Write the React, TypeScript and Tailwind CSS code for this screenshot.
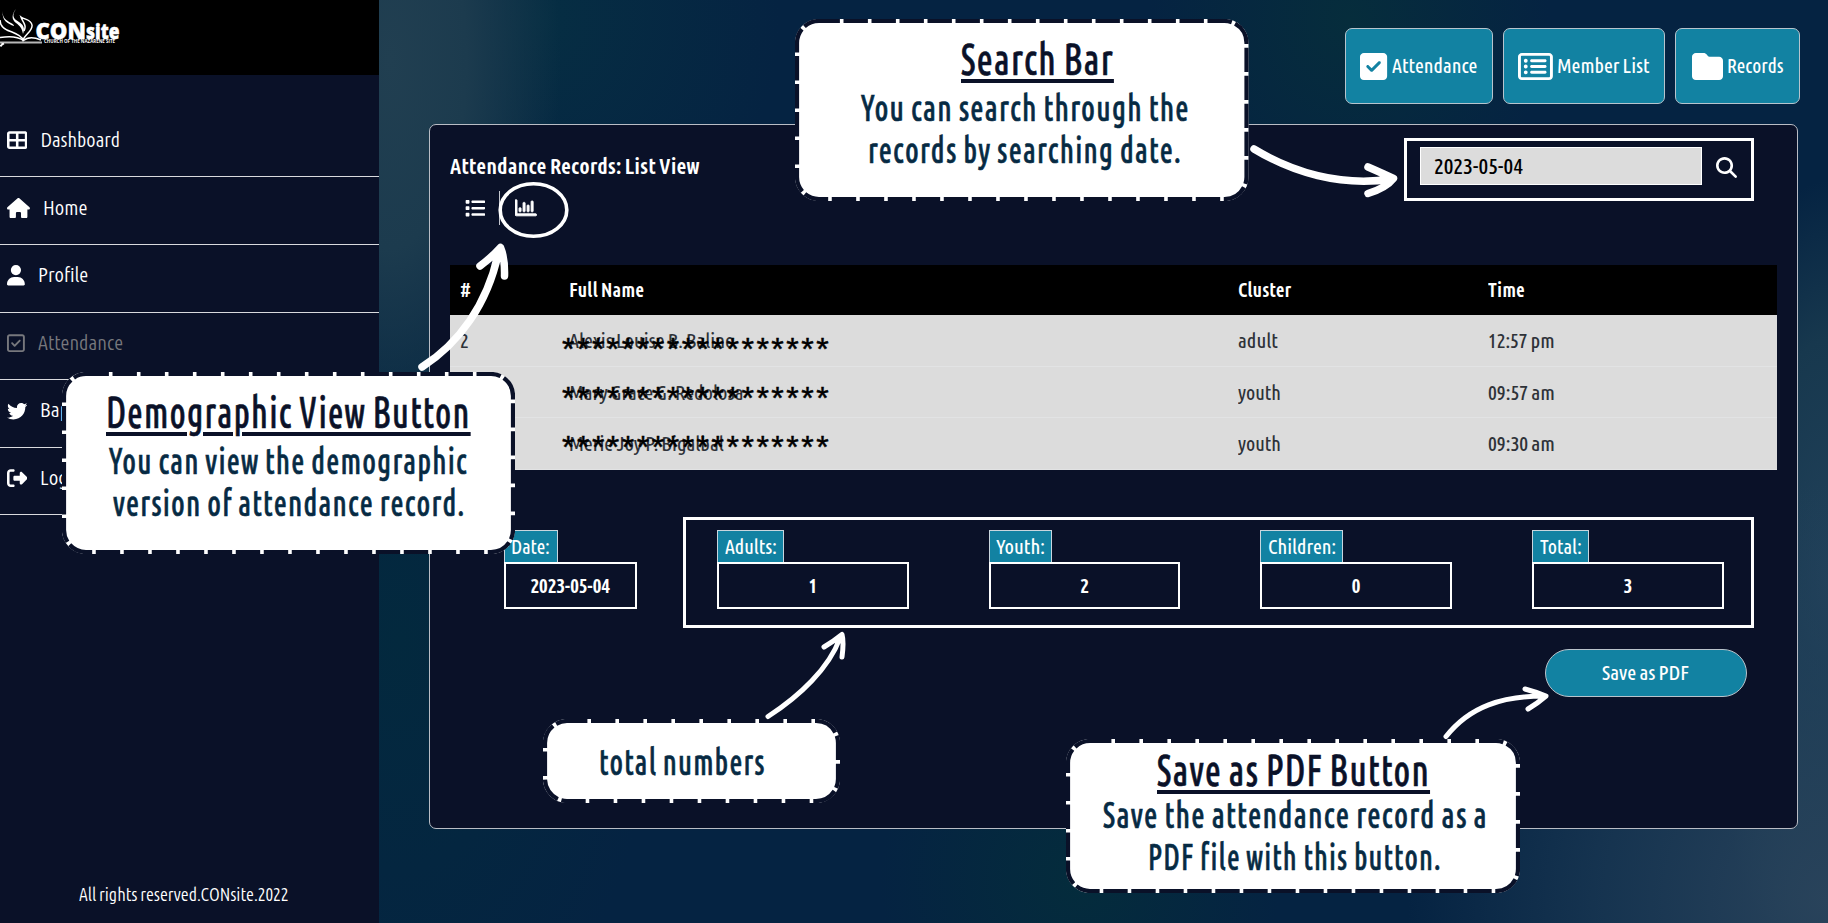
import { useLayoutEffect, useRef, useState } from 'react';
import type { ReactNode } from 'react';
import type { IconType } from 'react-icons';
import {
  FaTableCellsLarge,
  FaHouse,
  FaUser,
  FaRegSquareCheck,
  FaTwitter,
  FaRightFromBracket,
  FaSquareCheck,
  FaRegRectangleList,
  FaFolder,
  FaList,
  FaMagnifyingGlass,
} from 'react-icons/fa6';
import { FaRegChartBar } from 'react-icons/fa';

/** One line of text, squeezed or widened to the width of its box. */
function Fit({ children, className = '' }: { children: ReactNode; className?: string }) {
  const outer = useRef<HTMLSpanElement>(null);
  const inner = useRef<HTMLSpanElement>(null);
  const [scale, setScale] = useState(1);
  useLayoutEffect(() => {
    if (outer.current && inner.current && inner.current.offsetWidth > 0) {
      setScale(outer.current.clientWidth / inner.current.offsetWidth);
    }
  }, [children]);
  return (
    <span ref={outer} className={`block shrink-0 ${className}`}>
      <span
        ref={inner}
        className="inline-block origin-left whitespace-nowrap"
        style={{ transform: `scaleX(${scale})` }}
      >
        {children}
      </span>
    </span>
  );
}

type NavItem = { label: string; width: string; Icon: IconType; iconW: string; active?: boolean };

const nav: NavItem[] = [
  { label: 'Dashboard', width: 'w-[80px]', Icon: FaTableCellsLarge, iconW: 'w-[1em]' },
  { label: 'Home', width: 'w-[44px]', Icon: FaHouse, iconW: 'w-[1.125em]' },
  { label: 'Profile', width: 'w-[50px]', Icon: FaUser, iconW: 'w-[0.875em]' },
  { label: 'Attendance', width: 'w-[85px]', Icon: FaRegSquareCheck, iconW: 'w-[0.875em]', active: true },
  { label: 'Baptism', width: 'w-[62px]', Icon: FaTwitter, iconW: 'w-[1em]' },
  { label: 'Logout', width: 'w-[54px]', Icon: FaRightFromBracket, iconW: 'w-[1em]' },
];

function Logo() {
  return (
    <svg viewBox="0 0 124 60" className="block h-[60px] w-[124px] text-white" fill="none" stroke="currentColor">
      <path d="M0 20 C0 27 5 30 12 32 C17 34 22 36 23 40 C25 34 33 31 32 25 C31 19 25 20 21 17 C23 23 27 25 24 31" strokeWidth="1.5" />
      <path d="M3 11 C2 18 6 20 11 23 C13 24 14 25 14 26 C8 24 1 20 3 11 Z" fill="currentColor" stroke="none" />
      <path d="M16 9 C11 16 14 19 19 22 C24 25 25 29 23 34 C22 28 20 26 16 23 C11 19 12 14 16 9 Z" fill="currentColor" stroke="none" />
      <path d="M0 37.500 C9 36 18 36.500 23.500 40.500 C28 36.500 34 37 41 40" strokeWidth="1.500" />
      <path d="M0 42.500 L42 42.500" strokeWidth="1.800" stroke="#b8b8b8" />
      <path d="M0 46 L4 43.500 M1 46.500 L2.500 43" strokeWidth="1.500" />
      <text x="35.500" y="38.500" textLength="50.500" lengthAdjust="spacingAndGlyphs" fill="currentColor" strokeWidth="0.500" className="font-['Open_Sans'] text-[23.500px] font-extrabold [font-stretch:normal]">
        CON
      </text>
      <text x="86" y="38.500" textLength="33.500" lengthAdjust="spacingAndGlyphs" fill="currentColor" strokeWidth="0.500" className="font-['Open_Sans'] text-[21.500px] font-extrabold [font-stretch:normal]">
        site
      </text>
      <text x="44" y="43.300" textLength="71" lengthAdjust="spacingAndGlyphs" fill="currentColor" stroke="none" className="font-['Open_Sans'] text-[4.500px] font-bold [font-stretch:normal]">
        CHURCH OF THE NAZARENE SITE
      </text>
    </svg>
  );
}

function Sidebar() {
  return (
    <aside className="flex h-full w-[379px] shrink-0 flex-col bg-[#0a1128] text-white">
      <div className="h-[74.500px] bg-black">
        <Logo />
      </div>
      <nav className="mt-[35.300px] text-[20.400px]">
        {nav.map(({ label, width, Icon, iconW, active }) => (
          <div
            key={label}
            className={`flex h-[67.600px] items-center gap-[13px] border-b border-[#d9dade] pb-[5.500px] pl-[7px] ${active ? 'text-[#77787d]' : ''}`}
          >
            <Icon className={`shrink-0 ${iconW}`} />
            <Fit className={width}>{label}</Fit>
          </div>
        ))}
      </nav>
      <footer className="mt-auto mb-[15px] pl-[78.500px] text-[18px]">
        <Fit className="w-[209px]">All rights reserved.CONsite.2022</Fit>
      </footer>
    </aside>
  );
}

const actions = [
  { label: 'Attendance', box: 'w-[148px]', width: 'w-[85px]', Icon: FaSquareCheck, iconW: 'w-[0.875em]' },
  { label: 'Member List', box: 'w-[162.500px]', width: 'w-[92.500px]', Icon: FaRegRectangleList, iconW: 'w-[1.125em]' },
  { label: 'Records', box: 'w-[125px]', width: 'w-[57px]', Icon: FaFolder, iconW: 'w-[1em]' },
];

const rows = [
  { n: '2', name: 'Alexis Louise B. Balino', nameW: 'w-[165px]', cluster: 'adult', clusterW: 'w-[40px]', time: '12:57 pm', mask: 'top-[11.500px]' },
  { n: '', name: 'Mary Grace G. Redolosa', nameW: 'w-[174px]', cluster: 'youth', clusterW: 'w-[43px]', time: '09:57 am', mask: 'top-[9.500px]' },
  { n: '', name: 'Merie Joy P. Bigalbal', nameW: 'w-[155px]', cluster: 'youth', clusterW: 'w-[43px]', time: '09:30 am', mask: 'top-[7px]' },
];

const stats = [
  { label: 'Adults:', width: 'w-[51.500px]', value: '1' },
  { label: 'Youth:', width: 'w-[48.500px]', value: '2' },
  { label: 'Children:', width: 'w-[67.500px]', value: '0' },
  { label: 'Total:', width: 'w-[41.500px]', value: '3' },
];

function Stat({ label, labelW, box, children }: { label: string; labelW: string; box: string; children: ReactNode }) {
  return (
    <div className={`flex shrink-0 flex-col items-start ${box}`}>
      <div className="flex h-[32px] items-center border border-b-0 border-[#c9d6de] bg-[#1282a2] px-[6.500px] pt-px text-[20.400px] font-medium">
        <Fit className={labelW}>{label}</Fit>
      </div>
      <div className="flex h-[47px] w-full items-center justify-center border-2 border-white pt-px text-[20.400px] font-bold">
        {children}
      </div>
    </div>
  );
}

function Panel() {
  return (
    <section className="mt-[20px] flex h-[705px] w-[1369px] flex-col rounded-[7px] border border-[#b9bdc5] bg-[#0a1128] pl-[20px] text-white">
      <div className="mt-[13px] flex h-[63px] justify-between pr-[43px]">
        <div className="pt-[14px]">
          <Fit className="w-[249px] text-[21.500px] leading-[28px] font-bold">Attendance Records: List View</Fit>
          <div className="mt-[11px] flex h-[34px] items-center pl-[15px] text-[20.400px]">
            <FaList />
            <span className="mr-[15px] ml-[14px] h-full w-px bg-[#c4c7cf]" />
            <FaRegChartBar className="text-[21.500px]" stroke="currentColor" strokeWidth={22} />
          </div>
        </div>
        <div className="flex w-[350px] items-start border-[3px] border-white pt-[6px] pl-[12.500px]">
          <div className="flex h-[38px] w-[282px] items-center border border-white bg-[#dcdcdc] pb-[2px] pl-[13px] text-[22px] font-medium text-black">
            <Fit className="w-[89px]">2023-05-04</Fit>
          </div>
          <FaMagnifyingGlass className="mt-[10px] ml-[14.500px] text-[21px]" />
        </div>
      </div>

      <div className="mt-[64px] w-[1327px] text-[20.400px]">
        <div className="grid h-[50px] grid-cols-[119px_669px_250px_1fr] items-center bg-black pt-px font-bold">
          <Fit className="ml-[10px] w-[11px]">#</Fit>
          <Fit className="w-[75px]">Full Name</Fit>
          <Fit className="w-[53px]">Cluster</Fit>
          <Fit className="w-[37px]">Time</Fit>
        </div>
        {rows.map((r) => (
          <div
            key={r.name}
            className="grid h-[51.700px] grid-cols-[119px_669px_250px_1fr] items-center border-b border-[#e2e3e4] bg-[#dcdcdc] pt-[2px] font-medium text-[#2e3238]"
          >
            <span className="pl-[10px]">{r.n}</span>
            <div className="relative flex h-full items-center">
              <Fit className={r.nameW}>{r.name}</Fit>
              <span
                className={`absolute -left-[7px] font-['Liberation_Sans'] text-[32px] leading-[40px] font-normal tracking-[2.500px] whitespace-nowrap text-black [-webkit-text-stroke:0.500px_#000] ${r.mask}`}
              >
                ******************
              </span>
            </div>
            <Fit className={r.clusterW}>{r.cluster}</Fit>
            <Fit className="w-[67px]">{r.time}</Fit>
          </div>
        ))}
      </div>

      <div className="mt-[47px] flex pl-[53.500px]">
        <div className="pt-[13px]">
          <Stat label="Date:" labelW="w-[39px]" box="w-[133px]">
            <Fit className="w-[79px]">2023-05-04</Fit>
          </Stat>
        </div>
        <div className="ml-[46.500px] flex h-[111px] w-[1071px] gap-[80.200px] border-[3px] border-white pt-[10px] pl-[31px]">
          {stats.map((s) => (
            <Stat key={s.label} label={s.label} labelW={s.width} box="w-[191.500px]">
              {s.value}
            </Stat>
          ))}
        </div>
      </div>

      <button className="mt-[21px] mr-[50px] flex h-[48px] w-[202px] items-center justify-center self-end rounded-[24px] border border-[#b9c3cb] bg-[#1282a2] pr-[3px] text-[20px] font-medium">
        <Fit className="w-[87px]">Save as PDF</Fit>
      </button>
    </section>
  );
}

function Callout({
  place,
  w,
  h,
  offset,
  children,
}: {
  place: string;
  w: number;
  h: number;
  offset: number;
  children: ReactNode;
}) {
  return (
    <div className={`absolute ${place}`}>
      <svg viewBox={`0 0 ${w} ${h}`} className="absolute inset-0 h-full w-full">
        <rect width={w} height={h} rx="24" fill="#ffffff" />
        <rect
          x="2"
          y="2"
          width={w - 4}
          height={h - 4}
          rx="22"
          fill="none"
          stroke="#0a1128"
          strokeWidth="4.200"
          strokeDasharray="24.400 3.600"
          strokeDashoffset={offset}
        />
      </svg>
      <div className="relative flex h-full flex-col items-center text-[37px] leading-[42px] font-medium tracking-[1.500px] text-[#062a43] [-webkit-text-stroke:0.700px_#062a43]">
        {children}
      </div>
    </div>
  );
}

const titleStyle =
  'text-[44px] leading-[48px] text-[#0a1128] [&>span]:underline [&>span]:decoration-[3.500px] [&>span]:underline-offset-[4px] [-webkit-text-stroke:0.700px_#0a1128]';

function Annotations() {
  return (
    <>
      <Callout place="left-[795px] top-[19px] h-[182px] w-[453.500px]" w={453.5} h={182} offset={3.5}>
        <Fit className={`mt-[16px] ml-[31px] w-[153px] ${titleStyle}`}>Search Bar</Fit>
        <Fit className="mt-[3.500px] ml-[7px] w-[329px]">You can search through the</Fit>
        <Fit className="ml-[7px] w-[314px]">records by searching date.</Fit>
      </Callout>
      <Callout place="left-[62px] top-[371.500px] h-[182px] w-[453px]" w={453} h={182} offset={1.5}>
        <Fit className={`mt-[16px] w-[365px] ${titleStyle}`}>Demographic View Button</Fit>
        <Fit className="mt-[4px] w-[359px]">You can view the demographic</Fit>
        <Fit className="w-[352px]">version of attendance record.</Fit>
      </Callout>
      <Callout place="left-[542.500px] top-[719px] h-[84px] w-[297px]" w={297} h={84} offset={4}>
        <Fit className="mt-[22px] mr-[17px] w-[167px]">total numbers</Fit>
      </Callout>
      <Callout place="left-[1066px] top-[739px] h-[154px] w-[454px]" w={454} h={154} offset={3}>
        <Fit className={`mt-[7px] w-[273px] ${titleStyle}`}>Save as PDF Button</Fit>
        <Fit className="mt-[-0.500px] ml-[4px] w-[385px]">Save the attendance record as a</Fit>
        <Fit className="ml-[4px] w-[294px]">PDF file with this button.</Fit>
      </Callout>

      <svg
        viewBox="0 0 1828 923"
        className="pointer-events-none absolute inset-0 h-full w-full"
        fill="none"
        stroke="#ffffff"
        strokeLinecap="round"
        strokeLinejoin="round"
      >
        <ellipse cx="533.500" cy="210" rx="33.300" ry="26.300" strokeWidth="3.600" />
        <g strokeWidth="7.500">
          <path d="M1254 149 C1292 172 1340 187 1392 179 M1368 167 Q1384 174 1393.500 178.500 Q1386 188 1368 193.500" />
          <path d="M422 367 C458 344 488 305 499 250 M480 266 Q492 257 500.500 247.500 Q505 258 504.500 276" />
        </g>
        <g strokeWidth="5">
          <path d="M768 716.500 C800 696 829 668 840 638 M824 647 Q834 641 842 634.500 Q844 642 842 657" />
          <path d="M1446 736.500 C1470 706 1503 696 1544 696 M1525 689 Q1536 692 1546 696 Q1538 703 1528 709" />
        </g>
      </svg>
    </>
  );
}

export default function App() {
  return (
    <div className="relative flex h-[923px] w-[1828px] overflow-hidden bg-[radial-gradient(ellipse_420px_420px_at_1828px_900px,#29435b_0%,#22405a90_55%,#22405a00_100%),radial-gradient(ellipse_130px_400px_at_1828px_580px,#21415a_0%,#1d3f52c0_60%,#1d3f5200_100%),radial-gradient(ellipse_170px_420px_at_390px_60px,#213f51_0%,#1c3b4e_45%,#1c3b4e00_100%),radial-gradient(ellipse_240px_260px_at_540px_20px,#062e43_0%,#062e4300_100%),radial-gradient(ellipse_200px_220px_at_1350px_20px,#062d3c_0%,#062d3c00_100%),radial-gradient(ellipse_260px_460px_at_400px_640px,#03293e_0%,#03293e00_100%),radial-gradient(ellipse_200px_200px_at_1080px_880px,#042c3c_0%,#042c3c00_100%)] bg-[#052342] font-['Ubuntu','Open_Sans',sans-serif] [font-stretch:condensed]">
      <Sidebar />
      <main className="flex flex-1 flex-col pl-[50px]">
        <div className="mt-[28px] mr-[28px] flex justify-end gap-[10px] text-white">
          {actions.map(({ label, box, width, Icon, iconW }) => (
            <button
              key={label}
              className={`flex h-[76px] items-center justify-center gap-[4px] rounded-[7px] border border-[#b7c4cd] bg-[#1282a2] text-[20.400px] font-medium ${box}`}
            >
              <span className="text-[31px]">
                <Icon className={`shrink-0 ${iconW}`} />
              </span>
              <Fit className={width}>{label}</Fit>
            </button>
          ))}
        </div>
        <Panel />
      </main>
      <Annotations />
    </div>
  );
}
